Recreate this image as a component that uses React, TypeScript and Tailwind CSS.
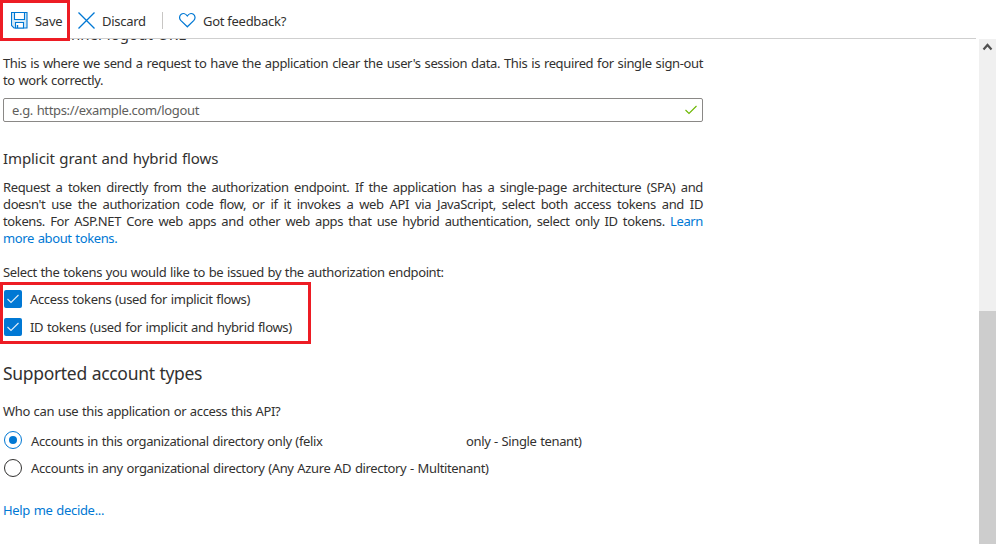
import type { ReactNode } from "react";

function Line({ children, fill = true }: { children: ReactNode; fill?: boolean }) {
  return (
    <span className={fill ? "block h-[17px] whitespace-nowrap text-justify [text-align-last:justify]" : "block h-[17px] whitespace-nowrap"}>
      {children}
    </span>
  );
}

function SaveIcon() {
  return (
    <svg width="17" height="17" viewBox="0 0 17 17" fill="none" stroke="#0078d4" className="shrink-0">
      <path d="M.5.5h15.500v15.500H3L.5 13.500z" fill="#d3e9f8" strokeWidth="1.1" />
      <path d="M3.500.5v7h10v-7z" fill="#fff" strokeWidth="1.1" />
      <path d="M4.500 16v-5.500h8V16z" fill="#fff" strokeWidth="1.1" />
      <path d="M6.500 13v3" strokeWidth="1.4" />
    </svg>
  );
}

function Check({ className }: { className: string }) {
  return (
    <svg width="14" height="12" viewBox="0 0 14 12" fill="none" stroke="currentColor" className={className}>
      <path d="M1.500 6l3.500 3.500L12.500 2" strokeWidth="1.1" />
    </svg>
  );
}

function TokenOption({ children }: { children: ReactNode }) {
  return (
    <label className="flex h-[18px] items-center">
      <span className="flex size-[18px] items-center justify-center rounded-[2px] bg-[#0078d4]">
        <Check className="text-[#e1effa]" />
      </span>
      <span className="ml-2 whitespace-nowrap">{children}</span>
    </label>
  );
}

export default function App() {
  return (
    <div className="relative flex h-[544px] w-[996px] flex-col overflow-hidden bg-white font-['Noto_Sans','Open_Sans',sans-serif] text-[13px] leading-[17px] tracking-[-0.37px] text-[#323130] [word-spacing:0.65px]">
      <header className="flex h-[39px] w-[976px] shrink-0 items-center border-b border-[#cfcfcf] pl-[11px] pt-[3px] tracking-[-0.27px] [word-spacing:normal]">
        <SaveIcon />
        <span className="ml-[7px] mt-0.5 w-[43px]">Save</span>
        <svg width="17" height="17" viewBox="0 0 17 17" fill="none" stroke="#0078d4" className="shrink-0">
          <path d="M.5.5l16 16M16.500.5l-16 16" strokeWidth="1.3" />
        </svg>
        <span className="ml-[7px] mt-0.5 w-[60px]">Discard</span>
        <span className="h-[17px] w-px bg-[#c8c6c4]" />
        <svg width="17" height="15" viewBox="0 0 17 15" fill="none" stroke="#0078d4" className="ml-4 shrink-0">
          <path d="M8.300 13.800L1.700 7.400C0 5.500.3 2.700 2.200 1.300 4.200 0 6.800.8 8.300 3 9.800.8 12.400 0 14.400 1.300c1.900 1.400 2.200 4.200.5 6.100z" strokeWidth="1.2" />
        </svg>
        <span className="ml-[7px] mt-0.5">Got feedback?</span>
      </header>
      <div className="flex min-h-0 flex-1">
        <main className="h-full w-[979px] overflow-hidden pl-[3px]">
          <h3 className="-mt-[15px] h-[20px] text-[15px] leading-5 tracking-[0.08px]">Front-channel logout URL</h3>
          <p className="mt-[11px] w-[700px]">
            <Line>This is where we send a request to have the application clear the user's session data. This is required for single sign-out</Line>
            <Line fill={false}>to work correctly.</Line>
          </p>
          <div className="mt-[9px] flex h-6 w-[700px] items-center justify-between rounded-[2px] border border-[#8a8886] pl-2 pr-1 text-[#605e5c]">
            <span className="tracking-[-0.34px]">e.g. https://example.com/logout</span>
            <Check className="text-[#6bb700]" />
          </div>
          <h3 className="mt-[26px] h-[20px] text-[15px] leading-5 tracking-[-0.09px]">Implicit grant and hybrid flows</h3>
          <p className="mt-[11px] w-[700px]">
            <Line>Request a token directly from the authorization endpoint. If the application has a single-page architecture (SPA) and</Line>
            <Line>doesn't use the authorization code flow, or if it invokes a web API via JavaScript, select both access tokens and ID</Line>
            <Line>tokens. For ASP.NET Core web apps and other web apps that use hybrid authentication, select only ID tokens. <a className="text-[#0078d4]">Learn</a></Line>
            <Line fill={false}><a className="text-[#0078d4]">more about tokens.</a></Line>
          </p>
          <p className="mt-[17px]">Select the tokens you would like to be issued by the authorization endpoint:</p>
          <div className="-ml-[3px] mt-px flex h-[62px] w-[311px] flex-col gap-[10px] border-[3px] border-[#ed1c24] pl-px pt-[5px] tracking-[-0.34px]">
            <TokenOption>Access tokens (used for implicit flows)</TokenOption>
            <TokenOption>ID tokens (used for implicit and hybrid flows)</TokenOption>
          </div>
          <h2 className="mt-[17px] h-6 text-[17.5px] leading-6 tracking-[-0.32px]">Supported account types</h2>
          <p className="mt-[18px] tracking-[-0.36px]">Who can use this application or access this API?</p>
          <label className="mt-[11px] flex h-[18px] items-center">
            <span className="ml-px flex size-[18px] items-center justify-center rounded-full border border-[#0078d4]">
              <span className="size-2 rounded-full bg-[#0078d4]" />
            </span>
            <span className="ml-[9px] mt-[3px] w-[435px] whitespace-nowrap">Accounts in this organizational directory only (felix</span>
            <span className="mt-[3px]">only - Single tenant)</span>
          </label>
          <label className="mt-[10px] flex h-[18px] items-center">
            <span className="ml-px size-[18px] rounded-full border border-[#323130]" />
            <span className="ml-[9px] tracking-[-0.35px]">Accounts in any organizational directory (Any Azure AD directory - Multitenant)</span>
          </label>
          <a className="mt-[25px] block tracking-[-0.32px] text-[#0078d4]">Help me decide...</a>
        </main>
        <aside className="flex h-full w-[17px] flex-col bg-[#f0f0f0]">
          <svg width="17" height="17" viewBox="0 0 17 17" fill="none" stroke="#505050">
            <path d="M4.500 10.500l4-4.500 4 4.500" strokeWidth="2.2" />
          </svg>
          <div className="mt-auto h-[233px] bg-[#cdcdcd]" />
        </aside>
      </div>
      <div className="absolute left-0 top-0 h-[41px] w-[70px] border-[3px] border-[#ed1c24]" />
    </div>
  );
}
